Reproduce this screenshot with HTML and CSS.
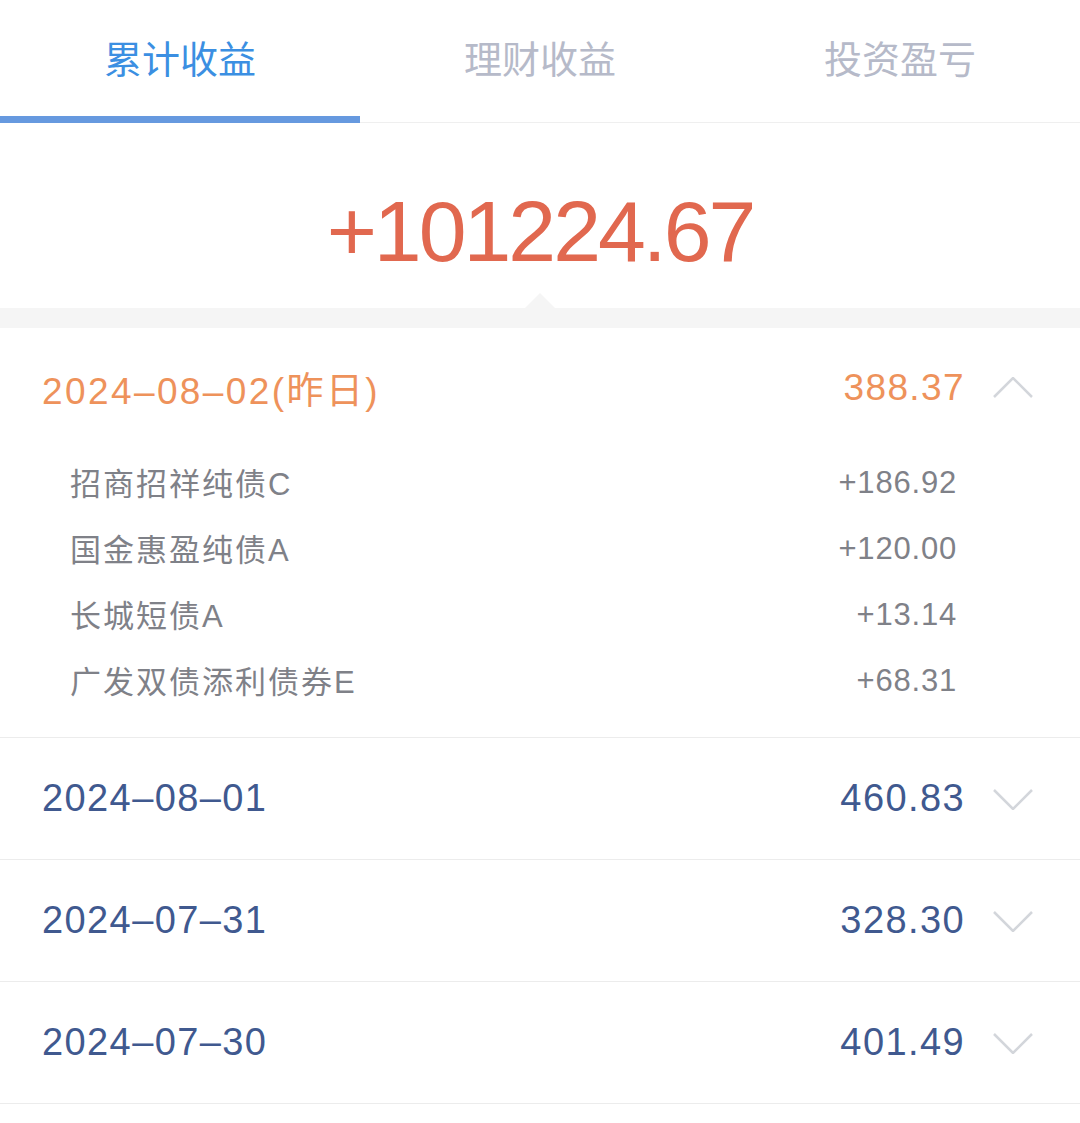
FILE: index.html
```html
<!DOCTYPE html>
<html lang="zh-CN">
<head>
    <meta charset="UTF-8">
    <meta name="viewport" content="width=device-width, initial-scale=1.0">
    <title>累计收益</title>
    <link rel="stylesheet" href="styles.css">
</head>
<body>
    <!-- 顶部标签 -->
    <nav class="tabs">
        <a class="tab active">累计收益</a>
        <a class="tab">理财收益</a>
        <a class="tab">投资盈亏</a>
    </nav>

    <!-- 总收益 -->
    <section class="summary">
        <div class="total">+101224.67</div>
    </section>
    <div class="band"></div>

    <!-- 每日明细 -->
    <div class="day open">
        <div class="day-head">
            <span class="date">2024–08–02(昨日)</span>
            <span class="amount">388.37</span>
            <svg class="chevron" width="40" height="22" viewBox="0 0 40 22"><polyline points="1,20 20,1 39,20" /></svg>
        </div>
        <ul class="funds">
            <li><span class="name">招商招祥纯债C</span><span class="gain">+186.92</span></li>
            <li><span class="name">国金惠盈纯债A</span><span class="gain">+120.00</span></li>
            <li><span class="name">长城短债A</span><span class="gain">+13.14</span></li>
            <li><span class="name">广发双债添利债券E</span><span class="gain">+68.31</span></li>
        </ul>
    </div>

    <div class="day">
        <div class="day-head">
            <span class="date">2024–08–01</span>
            <span class="amount">460.83</span>
            <svg class="chevron" width="40" height="22" viewBox="0 0 40 22"><polyline points="1,2 20,21 39,2" /></svg>
        </div>
    </div>

    <div class="day">
        <div class="day-head">
            <span class="date">2024–07–31</span>
            <span class="amount">328.30</span>
            <svg class="chevron" width="40" height="22" viewBox="0 0 40 22"><polyline points="1,2 20,21 39,2" /></svg>
        </div>
    </div>

    <div class="day">
        <div class="day-head">
            <span class="date">2024–07–30</span>
            <span class="amount">401.49</span>
            <svg class="chevron" width="40" height="22" viewBox="0 0 40 22"><polyline points="1,2 20,21 39,2" /></svg>
        </div>
    </div>
</body>
</html>
```

FILE: styles.css
```css
body {
    margin: 0;
    padding: 0;
    background: #fff;
    font-family: "Liberation Sans", "Noto Sans CJK SC", sans-serif;
}

/* Tabs */
.tabs {
    display: flex;
    height: 122px;
    border-bottom: 1px solid #efefef;
}

.tab {
    flex: 1;
    display: flex;
    align-items: center;
    justify-content: center;
    padding-bottom: 4px;
    font-size: 38px;
    color: #b6bac9;
    border-bottom: 7px solid transparent;
    margin-bottom: -1px;
}

.tab.active {
    color: #3b8fe2;
    border-bottom-color: #6699df;
}

/* Total */
.summary {
    position: relative;
    height: 185px;
    display: flex;
    align-items: center;
    justify-content: center;
}

.total {
    font-size: 86px;
    letter-spacing: -3px;
    color: #e1684f;
    padding-top: 32px;
}

.summary::after {
    content: "";
    position: absolute;
    left: 525px;
    bottom: 0;
    border-left: 15px solid transparent;
    border-right: 15px solid transparent;
    border-bottom: 15px solid #f5f5f5;
}

.band {
    height: 20px;
    background: #f5f5f5;
}

/* Day rows */
.day {
    border-bottom: 1px solid #ececec;
}

.day-head {
    display: flex;
    align-items: center;
    height: 121px;
    padding: 0 47px 0 42px;
    font-size: 38px;
    letter-spacing: 1.4px;
    color: #40598f;
}

.day.open .day-head {
    color: #ee925b;
    height: 122px;
    font-size: 37px;
    padding-bottom: 3px;
    box-sizing: border-box;
}

.day.open .date {
    letter-spacing: 2.4px;
}

.date {
    flex: 1;
}

.amount {
    margin-right: 28px;
}

.chevron {
    fill: none;
    stroke: #d3d6db;
    stroke-width: 2.5;
}

.funds {
    list-style: none;
    margin: 0;
    padding: 0 123px 23px 70px;
}

.funds li {
    display: flex;
    justify-content: space-between;
    align-items: center;
    height: 66px;
    font-size: 31px;
    color: #7f8188;
}

.name {
    letter-spacing: 2px;
    margin-top: -4px;
}

.gain {
    letter-spacing: 0.8px;
}
```
